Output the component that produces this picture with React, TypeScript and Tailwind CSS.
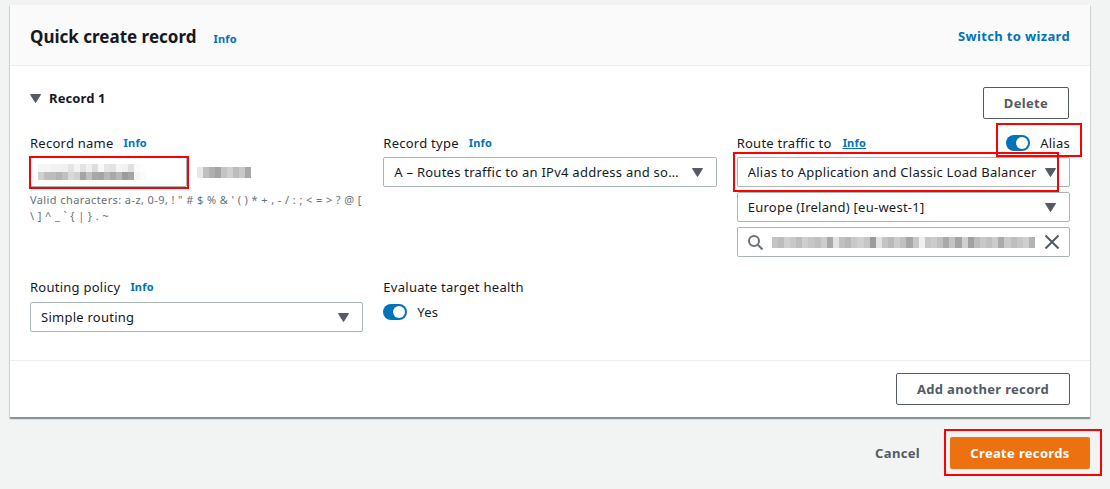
const font = "font-['Noto_Sans','Open_Sans',sans-serif]";

function Caret({ className = "" }: { className?: string }) {
  return (
    <svg width="11" height="9" viewBox="0 0 11 9" className={className}>
      <path d="M0.5 0.5h10L5.5 8.5z" fill="#545b64" stroke="#545b64" strokeLinejoin="round" />
    </svg>
  );
}

function Info({ underline = false }: { underline?: boolean }) {
  return (
    <span className={`text-[11px] font-bold tracking-[0.2px] text-[#0073bb] ${underline ? "underline" : ""}`}>Info</span>
  );
}

function Label({ text, underline }: { text: string; underline?: boolean }) {
  return (
    <div className={`flex h-[20px] items-center text-[13px] leading-[20px] tracking-[0.25px] text-[#16191f] ${underline ? "gap-[11px]" : "gap-[10px]"}`}>
      <span>{text}</span>
      <Info underline={underline} />
    </div>
  );
}

function Select({ text }: { text: string }) {
  return (
    <div className="flex h-[30px] items-center justify-between rounded-[2px] border border-[#aab7b8] bg-white pl-[10px] pr-[13px] text-[13px] tracking-[0.25px] text-[#16191f]">
      <span className="truncate pt-[2px]">{text}</span>
      <Caret className="ml-[8px] shrink-0" />
    </div>
  );
}

function Toggle() {
  return (
    <div className="flex h-[16px] w-[24px] items-center justify-end rounded-full bg-[#0073bb] pr-[2px]">
      <div className="h-[12px] w-[12px] rounded-full bg-white" />
    </div>
  );
}

function Mosaic({ cells, size, className = "" }: { cells: string[]; size: number; className?: string }) {
  return (
    <div className={`flex ${className}`}>
      {cells.map((c, i) => (
        <div key={i} className="h-full shrink-0" style={{ width: size, backgroundColor: c }} />
      ))}
    </div>
  );
}

const searchCells = [
  "#c4c4c4", "#bcbcbc", "#d0d0d0", "#c8c8c8", "#bdbdbd", "#cfcfcf", "#c6c6c6", "#bfbfbf", "#cdcdcd", "#a8a8a8",
  "#e2e2e2", "#c0c0c0", "#b8b8b8", "#c9c9c9", "#d0d0d0", "#c6c6c6", "#9c9c9c", "#e4e4e4", "#c4c4c4", "#b9b9b9",
  "#cccccc", "#c0c0c0", "#a6a6a6", "#c8c8c8", "#f0f0f0", "#c6c6c6", "#cccccc", "#c0c0c0", "#a9a9a9", "#c4c4c4",
  "#a4a4a4", "#d0d0d0", "#a0a0a0", "#bcbcbc", "#c8c8c8", "#bfbfbf", "#cccccc", "#aaaaaa", "#cacaca", "#bebebe",
  "#c6c6c6", "#cfcfcf", "#b4b4b4",
];

const nameTop = [
  "#f5f5f5", "#f5f5f5", "#f2f2f2", "#f2f2f2", "#f0f0f0", "#e4e4e4", "#f4f4f4", "#e2e2e2", "#f0f0f0", "#dcdcdc",
  "#f8f8f8", "#e6e6e6", "#e2e2e2", "#f4f4f4", "#f2f2f2", "#e0e0e0", "#fafafa", "#fdfdfd",
];

const nameBottom = [
  "#d0d0d0", "#bcbcbc", "#bcbcbc", "#b4b4b4", "#c0c0c0", "#d8d8d8", "#d0d0d0", "#a4a4a4", "#c0c0c0", "#a8a8a8",
  "#a4a4a4", "#b8b8b8", "#a8a8a8", "#b8b8b8", "#9c9c9c", "#a4a4a4", "#f4f4f4", "#fafafa",
];

const domainCells = ["#e8e8e8", "#c0c0c0", "#b0b0b0", "#a4a4a4", "#c4c4c4", "#d0d0d0", "#bcbcbc", "#c8c8c8", "#a8a8a8"];

export default function App() {
  return (
    <div className={`relative h-[489px] w-[1110px] overflow-hidden bg-[#f2f3f3] ${font}`}>
      <div className="pl-[10px] pr-[20px] pt-[5px]">
        <div className="h-[413px] border-b border-[#879596] bg-white shadow-[0_1px_1px_rgba(0,28,36,0.3),1px_1px_1px_rgba(0,28,36,0.1),-1px_1px_1px_rgba(0,28,36,0.1)]">
          <div className="flex h-[61px] items-center justify-between border-b border-[#eaeded] bg-[#fafafa] px-[20px] pt-[4px]">
            <div className="flex items-center gap-[17px]">
              <span className="text-[17px] font-bold leading-[24px] text-[#16191f]">Quick create record</span>
              <span className="mt-[5px] flex"><Info /></span>
            </div>
            <span className="text-[13px] font-bold tracking-[0.35px] text-[#0073bb]">Switch to wizard</span>
          </div>

          <div className="h-[295px] border-b border-[#eaeded] px-[20px]">
            <div className="flex h-[67px] items-start justify-between pt-[21px]">
              <div className="mt-[2px] flex items-center gap-[8px]">
                <Caret />
                <span className="text-[13px] font-bold leading-[18px] tracking-[0.1px] text-[#16191f]">Record 1</span>
              </div>
              <div className="mr-px flex h-[32px] w-[86px] items-center justify-center rounded-[2px] border border-[#545b64] bg-white pt-px text-[13px] font-bold tracking-[0.33px] text-[#545b64]">
                Delete
              </div>
            </div>

            <div className="grid grid-cols-3 gap-x-5">
              <div>
                <Label text="Record name" />
                <div className="mt-[4px] flex items-center gap-[10px]">
                  <div className="flex h-[30px] w-[157px] flex-col justify-center rounded-[2px] border border-[#aab7b8] bg-white pl-[7px]">
                    <Mosaic cells={nameTop} size={6} className="h-[8px]" />
                    <Mosaic cells={nameBottom} size={6} className="h-[8px]" />
                  </div>
                  <Mosaic cells={domainCells} size={6} className="h-[11px] w-[54px]" />
                </div>
                <p className="mt-[5px] text-[11px] leading-[16px] tracking-[0.4px] text-[#687078]">
                  Valid characters: a-z, 0-9, ! " # $ % &amp; ' ( ) * + , - / : ; &lt; = &gt; ? @ [ \ ] ^ _ ` {"{"} | {"}"} . ~
                </p>
              </div>

              <div>
                <Label text="Record type" />
                <div className="mt-[4px]">
                  <Select text="A – Routes traffic to an IPv4 address and some AWS resources" />
                </div>
              </div>

              <div>
                <div className="flex items-center justify-between">
                  <Label text="Route traffic to" underline />
                  <div className="flex items-center gap-[10px] text-[13px] leading-[20px] tracking-[0.25px] text-[#16191f]">
                    <Toggle />
                    <span>Alias</span>
                  </div>
                </div>
                <div className="mt-[4px] flex flex-col gap-[5px]">
                  <Select text="Alias to Application and Classic Load Balancer" />
                  <Select text="Europe (Ireland) [eu-west-1]" />
                  <div className="flex h-[30px] items-center rounded-[2px] border border-[#aab7b8] bg-white pl-[10px] pr-[10px]">
                    <svg width="15" height="15" viewBox="0 0 15 15" fill="none" stroke="#687078" strokeWidth="2" className="shrink-0">
                      <circle cx="6" cy="6" r="5" />
                      <path d="M9.5 9.5L14.5 14.5" />
                    </svg>
                    <Mosaic cells={searchCells} size={6.14} className="ml-[9px] h-[11px] w-[264px] shrink-0 overflow-hidden" />
                    <svg width="14" height="14" viewBox="0 0 14 14" fill="none" stroke="#545b64" strokeWidth="2" className="ml-[9px] shrink-0">
                      <path d="M0.5 0.5L13.5 13.5M13.5 0.5L0.5 13.5" />
                    </svg>
                  </div>
                </div>
              </div>
            </div>

            <div className="mt-[20px] grid grid-cols-3 gap-x-5">
              <div>
                <Label text="Routing policy" />
                <div className="mt-[5px]">
                  <Select text="Simple routing" />
                </div>
              </div>
              <div>
                <div className="h-[20px] text-[13px] leading-[20px] tracking-[0.27px] text-[#16191f]">Evaluate target health</div>
                <div className="mt-[5px] flex items-center gap-[10px] text-[13px] leading-[20px] tracking-[0.25px] text-[#16191f]">
                  <Toggle />
                  <span>Yes</span>
                </div>
              </div>
            </div>
          </div>

          <div className="flex justify-end px-[20px] pt-[12px]">
            <div className="flex h-[32px] w-[174px] items-center justify-center rounded-[2px] border border-[#545b64] bg-white pt-px text-[13px] font-bold tracking-[0.33px] text-[#545b64]">
              Add another record
            </div>
          </div>
        </div>

        <div className="mt-[19px] flex items-center justify-end gap-[30px]">
          <span className="pt-px text-[13px] font-bold tracking-[0.33px] text-[#545b64]">Cancel</span>
          <div className="flex h-[32px] w-[140px] items-center justify-center rounded-[2px] bg-[#ec7211] pt-px text-[13px] font-bold tracking-[0.33px] text-white">
            Create records
          </div>
        </div>
      </div>

      <div className="absolute left-[29px] top-[156px] h-[33px] w-[160px] border-2 border-[#ff0000]" />
      <div className="absolute left-[996px] top-[123px] h-[34px] w-[86px] border-2 border-[#ff0000]" />
      <div className="absolute left-[733px] top-[152px] h-[40px] w-[326px] border-2 border-[#ff0000]" />
      <div className="absolute left-[944px] top-[429px] h-[47px] w-[158px] border-2 border-[#ff0000]" />
    </div>
  );
}
